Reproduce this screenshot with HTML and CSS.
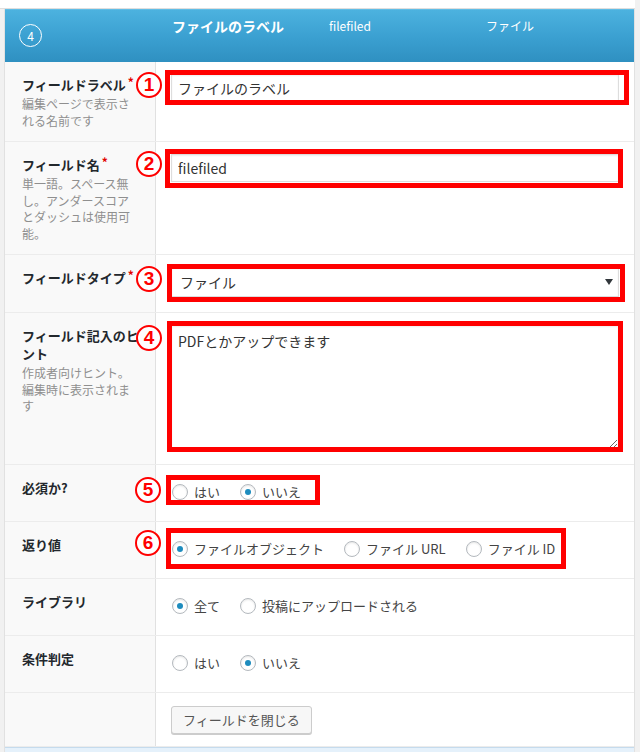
FILE: index.html
```html
<!DOCTYPE html>
<html lang="ja">
<head>
<meta charset="utf-8">
<title>ACF field</title>
<link rel="stylesheet" href="styles.css">
</head>
<body>
<div class="page">
  <div class="top-strip"></div>
  <div class="panel">
    <div class="head">
      <div class="head-order"><span class="order-circle">4</span></div>
      <div class="head-label">ファイルのラベル</div>
      <div class="head-name">filefiled</div>
      <div class="head-type">ファイル</div>
    </div>

    <div class="row">
      <div class="lab">
        <div class="lab-title">フィールドラベル<span class="req">*</span></div>
        <div class="lab-desc">編集ページで表示される名前です</div>
      </div>
      <div class="val">
        <div class="field">
          <input class="text-input" type="text" value="ファイルのラベル">
          <div class="mark mark-1"><span class="num num-a">1</span></div>
        </div>
      </div>
    </div>

    <div class="row">
      <div class="lab">
        <div class="lab-title">フィールド名<span class="req">*</span></div>
        <div class="lab-desc">単一語。スペース無し。アンダースコアとダッシュは使用可能。</div>
      </div>
      <div class="val">
        <div class="field">
          <input class="text-input" type="text" value="filefiled">
          <div class="mark mark-2"><span class="num num-a">2</span></div>
        </div>
      </div>
    </div>

    <div class="row">
      <div class="lab">
        <div class="lab-title">フィールドタイプ<span class="req">*</span></div>
      </div>
      <div class="val">
        <div class="field">
          <div class="select"><span>ファイル</span>
            <svg class="arrow" width="8" height="6" viewBox="0 0 8 6"><path d="M0 0H8L4 6Z" fill="#32373c"/></svg>
          </div>
          <div class="mark mark-3"><span class="num num-b">3</span></div>
        </div>
      </div>
    </div>

    <div class="row">
      <div class="lab">
        <div class="lab-title">フィールド記入のヒント</div>
        <div class="lab-desc">作成者向けヒント。編集時に表示されます</div>
      </div>
      <div class="val">
        <div class="field">
          <textarea class="textarea">PDFとかアップできます</textarea>
          <div class="mark mark-4"><span class="num num-b num-low">4</span></div>
        </div>
      </div>
    </div>

    <div class="row">
      <div class="lab">
        <div class="lab-title">必須か?</div>
      </div>
      <div class="val">
        <div class="field radio-list">
          <div class="radio-item"><span class="radio"></span>はい</div>
          <div class="radio-item"><span class="radio checked"></span>いいえ</div>
          <div class="mark mark-5"><span class="num num-b">5</span></div>
        </div>
      </div>
    </div>

    <div class="row">
      <div class="lab">
        <div class="lab-title">返り値</div>
      </div>
      <div class="val">
        <div class="field radio-list">
          <div class="radio-item"><span class="radio checked"></span>ファイルオブジェクト</div>
          <div class="radio-item"><span class="radio"></span>ファイル URL</div>
          <div class="radio-item"><span class="radio"></span>ファイル ID</div>
          <div class="mark mark-6"><span class="num num-b">6</span></div>
        </div>
      </div>
    </div>

    <div class="row">
      <div class="lab">
        <div class="lab-title">ライブラリ</div>
      </div>
      <div class="val">
        <div class="radio-list">
          <div class="radio-item"><span class="radio checked"></span>全て</div>
          <div class="radio-item"><span class="radio"></span>投稿にアップロードされる</div>
        </div>
      </div>
    </div>

    <div class="row">
      <div class="lab">
        <div class="lab-title">条件判定</div>
      </div>
      <div class="val">
        <div class="radio-list">
          <div class="radio-item"><span class="radio"></span>はい</div>
          <div class="radio-item"><span class="radio checked"></span>いいえ</div>
        </div>
      </div>
    </div>

    <div class="row row-last">
      <div class="lab"></div>
      <div class="val val-btn">
        <span class="btn">フィールドを閉じる</span>
      </div>
    </div>

    <div class="foot"></div>
  </div>
</div>
</body>
</html>
```

FILE: styles.css
```css
* { box-sizing: border-box; }

body {
  margin: 0;
  background: #f1f1f1;
  font-family: "Noto Sans CJK JP", "Noto Sans", sans-serif;
  color: #333;
}

.page {
  width: 640px;
  height: 752px;
  overflow: hidden;
}

.top-strip {
  width: 635px;
  height: 9px;
  background: #fff;
  border-bottom: 1px solid #dedede;
}

.panel {
  margin-left: 4px;
  width: 631px;
  background: #fff;
  border-left: 1px solid #e1e1e1;
  border-right: 1px solid #e1e1e1;
}

/* header */
.head {
  display: flex;
  align-items: flex-start;
  height: 53px;
  background: linear-gradient(to bottom, #4cb2df 0%, #3a9fd0 55%, #2f90c1 100%);
  border-top: 1px solid #5fbde6;
  color: #fff;
}

.head-order {
  width: 151px;
  padding-left: 14px;
  padding-top: 14px;
}

.order-circle {
  display: block;
  width: 23px;
  height: 23px;
  border: 1px solid #fff;
  border-radius: 50%;
  font-size: 12px;
  line-height: 21px;
  text-align: center;
}

.head-label {
  width: 173px;
  padding-left: 16px;
  padding-top: 6px;
  font-size: 14px;
  line-height: 20px;
  font-weight: bold;
}

.head-name {
  width: 157px;
  padding-top: 6px;
  font-size: 12px;
  line-height: 20px;
}

.head-type {
  padding-top: 6px;
  font-size: 12px;
  line-height: 20px;
}

/* rows */
.row {
  display: grid;
  grid-template-columns: 151px 1fr;
  border-bottom: 1px solid #ececec;
}

.lab {
  background: #f9f9f9;
  border-right: 1px solid #e1e1e1;
  padding: 14px 14px 12px 17px;
}

.lab-title {
  font-size: 13px;
  line-height: 18px;
  font-weight: bold;
  color: #23282d;
}

.req {
  position: relative;
  top: -3px;
  color: #e10000;
  font-size: 12px;
  line-height: 0;
  margin-left: 2px;
}

.lab-desc {
  margin-top: 2px;
  margin-right: 6px;
  font-size: 12px;
  line-height: 16.5px;
  color: #8f8f8f;
  line-break: strict;
}

.val {
  padding: 12px 15px 15px 15px;
}

.val-btn {
  padding: 13px 15px 12px 15px;
}

.field {
  position: relative;
}

.text-input {
  display: block;
  width: 100%;
  height: 28px;
  margin: 0;
  padding: 0 6px;
  border: 1px solid #ddd;
  box-shadow: inset 0 1px 2px rgba(0, 0, 0, 0.07);
  background: #fff;
  font-family: "Noto Sans CJK JP", "Noto Sans", sans-serif;
  font-size: 14px;
  color: #333;
  outline: none;
}

.select {
  display: flex;
  align-items: center;
  justify-content: space-between;
  height: 30px;
  padding: 0 5px 0 8px;
  border: 1px solid #ddd;
  box-shadow: inset 0 1px 2px rgba(0, 0, 0, 0.07);
  background: #fff;
  font-size: 14px;
  color: #333;
}

.arrow {
  display: block;
}

.textarea {
  display: block;
  width: 100%;
  height: 124px;
  margin: 0;
  padding: 5px 6px;
  border: 1px solid #ddd;
  box-shadow: inset 0 1px 2px rgba(0, 0, 0, 0.07);
  background: #fff;
  font-family: "Noto Sans CJK JP", "Noto Sans", sans-serif;
  font-size: 14px;
  line-height: 20px;
  color: #333;
  resize: vertical;
  outline: none;
}

/* radios */
.radio-list {
  display: flex;
  width: max-content;
  gap: 20px;
  padding-left: 1px;
  height: 29px;
  align-items: center;
}

.radio-item {
  display: flex;
  align-items: center;
  gap: 6px;
  font-size: 13px;
  line-height: 29px;
  color: #444;
}

.radio {
  position: relative;
  width: 16px;
  height: 16px;
  border: 1px solid #b4b9be;
  border-radius: 50%;
  background: #fff;
  box-shadow: inset 0 1px 2px rgba(0, 0, 0, 0.1);
}

.radio.checked::before {
  content: "";
  position: absolute;
  left: 4px;
  top: 4px;
  width: 6px;
  height: 6px;
  border-radius: 50%;
  background: #1e8cbe;
}

/* button */
.btn {
  display: inline-block;
  height: 28px;
  padding: 0 11px;
  border: 1px solid #ccc;
  border-radius: 3px;
  background: #f7f7f7;
  box-shadow: 0 1px 0 #ccc;
  font-size: 13px;
  line-height: 26px;
  color: #555;
  vertical-align: top;
}

.foot {
  height: 12px;
  background: #e5f1fb;
  border-top: 1px solid #c5dbed;
}

/* annotation overlays */
.mark {
  position: absolute;
  border: 5px solid #ff0000;
  pointer-events: none;
}

.mark-1 { top: -4px; left: -6px; right: -10px; bottom: -3px; }
.mark-2 { top: -5px; left: -6px; right: -4px; bottom: -6px; }
.mark-3 { top: -3px; left: -4px; right: -6px; bottom: -5px; }
.mark-4 { top: -4px; left: -4px; right: -4px; bottom: -3px; }
.mark-5 { top: -2px; left: -5px; right: -19px; bottom: 1px; }
.mark-6 { top: -6px; left: -5px; right: -11px; bottom: -6px; }

.num {
  position: absolute;
  top: -3px;
  width: 26px;
  height: 26px;
  border: 2px solid #ff0000;
  border-radius: 50%;
  background: #fff;
  color: #ff0000;
  font-family: "Liberation Sans", Arial, sans-serif;
  font-weight: bold;
  font-size: 19px;
  line-height: 22px;
  text-align: center;
}

.num-a { left: -34px; }
.num-b { left: -36px; }
.num-low { top: -1px; }
```
